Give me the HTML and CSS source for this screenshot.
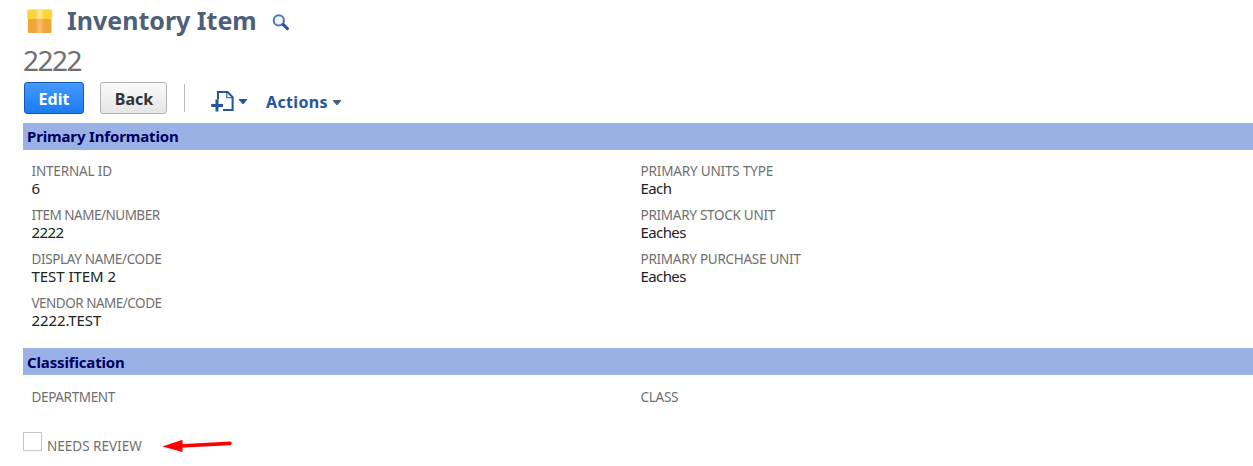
FILE: index.html
```html
<!DOCTYPE html>
<html lang="en">
<head>
<meta charset="utf-8">
<title>Inventory Item</title>
<link rel="stylesheet" href="styles.css">
</head>
<body>
<main class="record">
  <header class="heading">
    <svg class="box-icon" viewBox="0 0 26 25" width="26" height="25">
      <rect x="1" y="9" width="23.5" height="15" rx="1" fill="#efa537"/>
      <rect x="0.2" y="0.4" width="25" height="9.5" rx="1" fill="#ffd43b"/>
      <rect x="9" y="0.4" width="8" height="9.5" fill="#ffdc55"/>
      <rect x="10.5" y="0.4" width="4.5" height="9.5" fill="#ffe78c"/>
      <rect x="9" y="9.9" width="8" height="14.1" fill="#f1ac49"/>
      <rect x="10.5" y="9.9" width="4.5" height="14.1" fill="#f5bc68"/>
    </svg>
    <h1 class="title">Inventory Item</h1>
    <svg class="search-icon" viewBox="0 0 18 18" width="18" height="18">
      <circle cx="6.8" cy="6.4" r="5.1" fill="#f1f6fc" stroke="#4a78b4" stroke-width="2"/>
      <path d="M11 10.4l4.4 4.2" stroke="#2757a0" stroke-width="3.2" stroke-linecap="round"/>
    </svg>
  </header>
  <div class="record-name"><span>2222</span></div>
  <div class="toolbar">
    <button class="button primary">Edit</button>
    <button class="button secondary">Back</button>
    <span class="divider"></span>
    <svg class="new-icon" viewBox="0 0 24 22" width="24" height="22">
      <path d="M7 8.5V1.1h9.6l5 5v13H12" fill="none" stroke="#25559c" stroke-width="2"/>
      <path d="M15.8 1.5v5.3h5.6" fill="none" stroke="#25559c" stroke-width="1.1"/>
      <path d="M6 8.4v12M0.2 14.4h11.8" stroke="#25559c" stroke-width="3"/>
    </svg>
    <svg class="caret" viewBox="0 0 8 5" width="8" height="5"><path d="M0 0h8v1L4.5 5h-1L0 1z" fill="#25559c"/></svg>
    <span class="actions">Actions</span>
    <svg class="caret actions-caret" viewBox="0 0 8 5" width="8" height="5"><path d="M0 0h8v1L4.5 5h-1L0 1z" fill="#4d5f79"/></svg>
  </div>
  <h2 class="section-title">Primary Information</h2>
  <section class="fields primary-fields">
    <dl class="column">
      <dt class="short">INTERNAL ID</dt><dd>6</dd>
      <dt class="tight">ITEM NAME/NUMBER</dt><dd>2222</dd>
      <dt>DISPLAY NAME/CODE</dt><dd class="wide">TEST ITEM 2</dd>
      <dt class="tight">VENDOR NAME/CODE</dt><dd class="mixed">2222.TEST</dd>
    </dl>
    <dl class="column">
      <dt class="short">PRIMARY UNITS TYPE</dt><dd>Each</dd>
      <dt class="units">PRIMARY STOCK UNIT</dt><dd>Eaches</dd>
      <dt class="units">PRIMARY PURCHASE UNIT</dt><dd>Eaches</dd>
    </dl>
  </section>
  <h2 class="section-title classification">Classification</h2>
  <section class="fields class-fields">
    <dl class="column"><dt>DEPARTMENT</dt></dl>
    <dl class="column"><dt class="units">CLASS</dt></dl>
  </section>
  <div class="review">
    <span class="checkbox"></span>
    <span class="review-label">NEEDS REVIEW</span>
    <svg class="arrow" viewBox="0 0 72 16" width="72" height="16">
      <path d="M18 8L68 5.4" stroke="#fe0000" stroke-width="3.6" stroke-linecap="round"/>
      <path d="M0.5 8.6L20.5 1.8V14z" fill="#fe0000"/>
    </svg>
  </div>
</main>
</body>
</html>
```
FILE: styles.css
```css
* { box-sizing: border-box; }
body {
  margin: 0;
  background: #fff;
  font-family: "Noto Sans", "Open Sans", sans-serif;
  overflow: hidden;
}
.record { padding-left: 23px; height: 466px; }
.heading { display: flex; align-items: flex-start; height: 44px; padding-left: 4px; }
.box-icon { margin-top: 9px; }
.title {
  margin: 0 0 0 14px;
  width: 205px;
  font-size: 25px;
  line-height: 40px;
  font-weight: 700;
  color: #4d5f79;
  white-space: nowrap;
}
.search-icon { margin-top: 14px; }
.record-name {
  height: 38px;
  font-size: 28px;
  line-height: 32px;
  letter-spacing: -1.5px;
  color: #6f6f6f;
}
.toolbar { display: flex; align-items: flex-start; height: 41px; padding-left: 1px; }
.button {
  height: 32px;
  padding: 0;
  border-radius: 3px;
  font: 700 16px/30px "Noto Sans", sans-serif;
}
.primary {
  width: 60px;
  border: 1px solid #125ab2;
  background: linear-gradient(#4599ff, #1a7bf0);
  color: #fff;
  padding-top: 1px;
}
.secondary {
  width: 67px;
  margin-left: 16px;
  padding: 1px 0 0 1px;
  border: 1px solid #b2b2b2;
  background: linear-gradient(#fafafa, #e5e5e5);
  color: #333;
}
.divider { width: 1px; height: 28px; margin: 2px 26px 0 17px; background: #b8b8b8; }
.new-icon { margin-top: 9px; }
.caret { margin: 17px 0 0 4px; }
.actions {
  width: 63px;
  margin-left: 19px;
  font-size: 16px;
  line-height: 40px;
  letter-spacing: 0.35px;
  font-weight: 700;
  color: #25559c;
}
.actions-caret { margin-top: 18px; }
.section-title {
  height: 27px;
  margin: 0;
  padding-left: 4px;
  background: #9ab1e5;
  color: #00005f;
  font-size: 15px;
  line-height: 27px;
  letter-spacing: -0.15px;
  font-weight: 700;
}
.classification { line-height: 29px; }
.fields { display: grid; grid-template-columns: 609px 1fr; padding: 13px 0 0 8.5px; }
.primary-fields { height: 198px; }
.class-fields { height: 57px; padding-top: 14px; }
.column { margin: 0; font-size: 15px; line-height: 17px; }
.column dt, .review-label {
  font-size: 13.5px;
  letter-spacing: -0.35px;
  color: #6f6f6f;
  white-space: nowrap;
}
.column dt { height: 17px; }
.column dt.short { letter-spacing: -0.16px; }
.column dt.units { letter-spacing: -0.27px; }
.column dt.tight { letter-spacing: -0.5px; }
.column dd {
  height: 18px;
  margin: 0 0 9px;
  line-height: 16px;
  letter-spacing: -0.6px;
  color: #222;
}
.column dd.wide { letter-spacing: -0.05px; }
.column dd.mixed { letter-spacing: -0.1px; }
.review { display: flex; align-items: flex-start; }
.checkbox { width: 19px; height: 19px; border: 1px solid #c6c6c6; }
.review .review-label { width: 115px; margin-left: 5px; line-height: 28px; letter-spacing: 0; }
.arrow { margin-top: 6px; }
```
